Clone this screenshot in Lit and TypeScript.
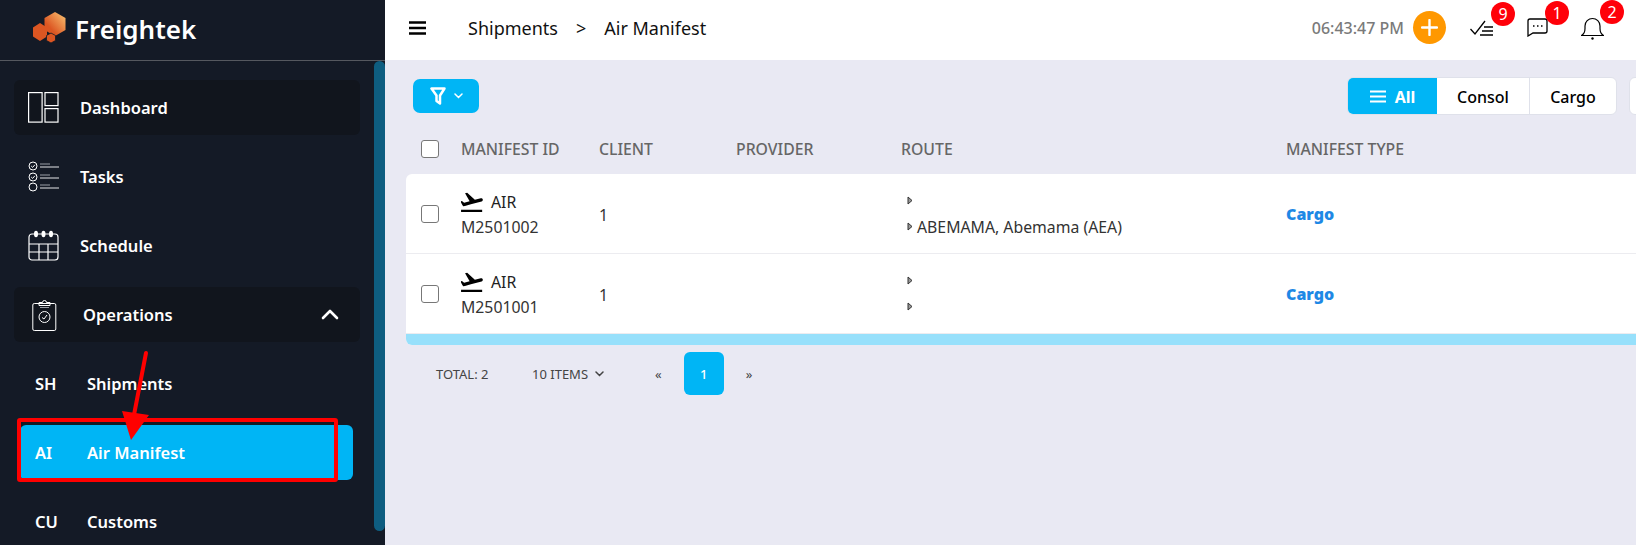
import { LitElement, html, css, svg } from "lit";
import { customElement } from "lit/decorators.js";

const check = (y: number, on: boolean) => svg`
  <circle cx="5" cy="${y}" r="4" fill="none" stroke="#fff" stroke-width="1"/>
  ${on ? svg`<path d="M3.2 ${y}l1.4 1.4 2.3-2.6" fill="none" stroke="#fff" stroke-width="1"/>` : ""}
  <path d="M12 ${y - 2}h10" stroke="#9a9ea6" stroke-width="1"/>
  <path d="M12 ${y + 1}h19" stroke="#e4e5e8" stroke-width="1"/>`;

const icons = {
  dash: html`<svg width="31" height="31" viewBox="0 0 31 31"><g fill="none" stroke="#fff" stroke-width="1.2"><rect x=".6" y=".6" width="13.5" height="29.5"/><rect x="17" y=".6" width="13" height="13"/><rect x="17" y="16.6" width="13" height="13.5"/></g></svg>`,
  tasks: html`<svg width="31" height="31" viewBox="0 0 31 31">${check(5, true)}${check(16, true)}${check(26, false)}</svg>`,
  cal: html`<svg width="31" height="31" viewBox="0 0 31 31"><g fill="none" stroke="#fff" stroke-width="1.2"><path d="M4 4h23a3 3 0 0 1 3 3v20a3 3 0 0 1-3 3H4a3 3 0 0 1-3-3V7a3 3 0 0 1 3-3z"/><path d="M1 14h29M1 22h29M11 14v16M20 14v16"/></g><g fill="#fff"><ellipse cx="8" cy="4" rx="2" ry="3.2"/><ellipse cx="15.500" cy="4" rx="2" ry="3.2"/><ellipse cx="23" cy="4" rx="2" ry="3.2"/></g></svg>`,
  ops: html`<svg width="25" height="33" viewBox="0 0 25 33"><g fill="none" stroke="#fff" stroke-width="1"><rect x=".8" y="5.500" width="23" height="27" rx="1.500"/><path d="M7 7.500V4.500h3.500a2 2 0 0 1 4 0H18v3z"/><path d="M8 9.500h9" stroke="#9a9ea6"/><circle cx="12.500" cy="19" r="5.500"/><path d="M10 19.500l2 1.500 3-4"/></g></svg>`,
  up: html`<svg width="18" height="11" viewBox="0 0 18 11"><path d="M2 9l7-7 7 7" fill="none" stroke="#fff" stroke-width="2.600" stroke-linecap="round" stroke-linejoin="round"/></svg>`,
  logo: html`<svg width="33" height="31" viewBox="0 0 33 31"><defs><linearGradient id="lg" x1="0" y1="1" x2="1" y2="0"><stop offset=".3" stop-color="#dc5622"/><stop offset="1" stop-color="#fac674"/></linearGradient></defs><path fill="url(#lg)" d="M22 0l10.500 6v12L22 24l-10.500-6V6z"/><path fill="#dc5622" d="M7 11l7 4.500v9L7 29l-7-4.500v-9z"/><path fill="#dc5622" stroke="#141a26" stroke-width=".8" d="M18 21l4.500 2.500v5L18 31l-4.500-2.500v-5z"/></svg>`,
  burger: html`<svg width="17" height="14" viewBox="0 0 17 14"><path d="M0 1.500h17M0 7h17M0 12.500h17" stroke="#000" stroke-width="2.600"/></svg>`,
  plus: html`<svg width="17" height="17" viewBox="0 0 17 17"><path d="M8.500 1v15M1 8.500h15" stroke="#fff" stroke-width="2.400" stroke-linecap="round"/></svg>`,
  checks: html`<svg width="24" height="16" viewBox="0 0 24 16"><path d="M.5 9l4.500 5L15 1M14 7h9M12 11h11M10 15h13" fill="none" stroke="#000" stroke-width="1.300"/></svg>`,
  chat: html`<svg width="21" height="19" viewBox="0 0 21 19"><path d="M3 1h15a2 2 0 0 1 2 2v10a2 2 0 0 1-2 2H6l-5 3V3a2 2 0 0 1 2-2z" fill="none" stroke="#000" stroke-width="1.300"/><path d="M6 8h1.500M10 8h1.500M14 8h1.500" stroke="#000" stroke-width="1.600"/></svg>`,
  bell: html`<svg width="23" height="23" viewBox="0 0 23 23"><path d="M.5 18.500c2.500-1.500 3.500-3 3.500-7V9a7.500 7.500 0 0 1 15 0v2.500c0 4 1 5.500 3.500 7z" fill="none" stroke="#000" stroke-width="1.200"/><circle cx="11.500" cy="21.500" r="1.200" fill="#000"/></svg>`,
  filter: html`<svg width="16" height="18" viewBox="0 0 16 18"><path d="M1.500 1.500h13L10 8.500V16.500L6.500 14V8.500z" fill="none" stroke="#fff" stroke-width="2.500" stroke-linejoin="round"/></svg>`,
  down: html`<svg width="9" height="6" viewBox="0 0 9 6"><path d="M1 1l3.500 3.500L8 1" fill="none" stroke="currentColor" stroke-width="1.500" stroke-linecap="round"/></svg>`,
  lines: html`<svg width="16" height="13" viewBox="0 0 16 13"><path d="M0 1.500h16M0 6.500h16M0 11.500h16" stroke="#fff" stroke-width="2"/></svg>`,
  plane: html`<svg width="22" height="20" viewBox="2.500 3 19.700 18"><path fill="#000" d="M2.500 19h19v2h-19zm19.570-9.360c-.21-.8-1.040-1.280-1.840-1.060L14.920 10l-6.900-6.430-1.930.51 4.140 7.170-4.970 1.330-1.970-1.540-1.450.39 1.820 3.160.77 1.330 1.600-.43 5.310-1.420 4.350-1.160L21 11.490c.81-.23 1.280-1.050 1.070-1.850z"/></svg>`,
  tri: html`<svg width="6" height="9" viewBox="0 0 6 9"><path d="M1 1l4 3.500L1 8z" fill="#999" stroke="#333" stroke-width="1"/></svg>`,
};

const rows = [
  { id: "M2501002", from: "", to: "ABEMAMA, Abemama (AEA)" },
  { id: "M2501001", from: "", to: "" },
];

@customElement("app-root")
export class AppRoot extends LitElement {
  static styles = css`
    :host {
      display: grid;
      grid-template-columns: 385px 1fr;
      height: 100vh;
      min-height: 545px;
      overflow: hidden;
      position: relative;
      font-family: "Noto Sans", "Open Sans", sans-serif;
    }
    .side { background: #141a26; color: #fff; display: flex; flex-direction: column; overflow: hidden; }
    .brand { height: 60px; border-bottom: 1px solid #55585f; display: flex; align-items: center; gap: 8px; padding-left: 33px; box-sizing: content-box; font-size: 26px; font-weight: 600; flex: none; }
    .brand svg { margin-top: -5px; }
    .brand span { margin-top: -3px; margin-left: 1px; }
    .side-body { display: flex; flex: 1; min-height: 0; }
    .nav { flex: 1; padding: 19px 14px 0; display: flex; flex-direction: column; gap: 14px; overflow: hidden; }
    .item { flex: none; height: 55px; display: flex; align-items: center; font-size: 16.500px; font-weight: 600; border-radius: 6px; padding-left: 14px; }
    .item .ic { width: 52px; display: flex; flex: none; }
    .boxed { background: #11151d; }
    .ops { padding-left: 18px; }
    .ops .ic { width: 51px; }
    .ops .up { margin-left: auto; margin-right: 21px; display: flex; }
    .sub { margin: 0 7px 0 6px; padding-left: 15px; }
    .sub .abbr { width: 52px; flex: none; }
    .sub.active { background: #00b5f5; }
    .thumb { width: 11px; height: 470px; background: #0e5d80; border-radius: 6px; flex: none; }

    .main { background: #e9e9f3; min-width: 0; overflow: hidden; }
    .top { height: 60px; background: #fff; display: flex; align-items: center; padding: 0 32px 4px 24px; box-sizing: border-box; }
    .burger { display: flex; margin-right: 42px; }
    .crumb { font-size: 18px; color: #111; display: flex; gap: 18px; }
    .right { margin-left: auto; display: flex; align-items: center; }
    .clock { font-size: 16px; font-weight: 500; color: #7a7a7a; margin-right: 9px; }
    .add { width: 33px; height: 33px; border-radius: 50%; background: #ff9800; display: flex; align-items: center; justify-content: center; margin-right: 24px; margin-top: -1px; }
    .bi { position: relative; display: flex; margin-right: 33px; }
    .bi.chat { margin-top: -2px; }
    .bi:last-child { margin-right: 0; }
    .badge { position: absolute; width: 24px; height: 24px; border-radius: 50%; background: #ff0009; color: #fff; font-size: 16px; display: flex; align-items: center; justify-content: center; }

    .tools { display: flex; justify-content: space-between; align-items: center; padding: 17px 0 0 28px; height: 38px; box-sizing: content-box; }
    .fbtn { width: 66px; height: 34px; background: #00b5f5; border-radius: 7px; color: #fff; display: flex; align-items: center; justify-content: center; gap: 8px; }
    .segs { display: flex; gap: 12px; margin-right: -33px; }
    .seg { display: flex; height: 38px; background: #fff; border-radius: 6px; border: 1px solid #dfe1ea; box-sizing: border-box; overflow: hidden; }
    .seg > div { display: flex; align-items: center; justify-content: center; gap: 9px; font-size: 16px; font-weight: 500; color: #000; padding-top: 1px; box-sizing: border-box; }
    .seg .all { width: 89px; background: #00b5f5; color: #fff; font-weight: 700; }
    .seg .con { width: 93px; border-right: 1px solid #dfe1ea; }
    .seg .car { width: 86px; }
    .blank { width: 40px; }

    .grid { display: grid; grid-template-columns: 55px 138px 137px 165px 385px 1fr; align-items: center; }
    .thead { margin: 19px 0 10px 21px; height: 30px; font-size: 15.800px; font-weight: 500; color: #666; }
    .box { width: 18px; height: 18px; box-sizing: border-box; border: 1.500px solid #777; border-radius: 3px; background: #fff; margin-left: 15px; }
    .tbody { margin-left: 21px; background: #fff; border-radius: 6px 0 0 6px; overflow: hidden; }
    .row { height: 79px; border-bottom: 1px solid #ececf0; font-size: 15.800px; color: #333; }
    .row:last-of-type { border-bottom: 1px solid #f2f2f6; }
    .mid { display: flex; flex-direction: column; gap: 6px; }
    .mid > div { line-height: 20px; }
    .air { display: flex; align-items: center; gap: 8px; color: #222; }
    .idcell { gap: 5px; }
    .idcell .air { margin-top: 1px; }
    .num { padding-top: 2px; }
    .pt { display: flex; align-items: center; gap: 4px; height: 20px; margin-left: 6px; }
    .cargo { font-weight: 900; color: #1e88e5; font-size: 16px; }
    .hbar { height: 11px; background: #97e0fb; }

    .pager { display: flex; align-items: center; margin: 7px 0 0 51px; height: 43px; font-size: 13px; color: #444; }
    .total { width: 96px; }
    .items { display: flex; align-items: center; gap: 7px; width: 123px; }
    .pg { width: 40px; height: 43px; border-radius: 6px; background: #00b5f5; color: #fff; display: flex; align-items: center; justify-content: center; font-weight: 500; margin: 0 22px 0 22px; }

    .mark { position: absolute; left: 17px; top: 418px; width: 321px; height: 64px; box-sizing: border-box; border: 4px solid #ff0000; border-radius: 3px; pointer-events: none; }
    .arrow { position: absolute; left: 115px; top: 350px; pointer-events: none; }
  `;

  render() {
    return html`
      <aside class="side">
        <div class="brand">${icons.logo}<span>Freightek</span></div>
        <div class="side-body">
          <nav class="nav">
            <div class="item boxed"><span class="ic">${icons.dash}</span>Dashboard</div>
            <div class="item"><span class="ic">${icons.tasks}</span>Tasks</div>
            <div class="item"><span class="ic">${icons.cal}</span>Schedule</div>
            <div class="item boxed ops"><span class="ic">${icons.ops}</span>Operations<span class="up">${icons.up}</span></div>
            <div class="item sub"><span class="abbr">SH</span>Shipments</div>
            <div class="item sub active"><span class="abbr">AI</span>Air Manifest</div>
            <div class="item sub"><span class="abbr">CU</span>Customs</div>
          </nav>
          <div class="thumb"></div>
        </div>
      </aside>
      <main class="main">
        <header class="top">
          <span class="burger">${icons.burger}</span>
          <div class="crumb"><span>Shipments</span><span>&gt;</span><span>Air Manifest</span></div>
          <div class="right">
            <span class="clock">06:43:47 PM</span>
            <span class="add">${icons.plus}</span>
            <span class="bi">${icons.checks}<span class="badge" style="left:21px;top:-18px">9</span></span>
            <span class="bi chat">${icons.chat}<span class="badge" style="left:18px;top:-17px">1</span></span>
            <span class="bi">${icons.bell}<span class="badge" style="left:19px;top:-17px">2</span></span>
          </div>
        </header>
        <div class="tools">
          <div class="fbtn">${icons.filter}${icons.down}</div>
          <div class="segs">
            <div class="seg">
              <div class="all">${icons.lines}All</div>
              <div class="con">Consol</div>
              <div class="car">Cargo</div>
            </div>
            <div class="seg blank"></div>
          </div>
        </div>
        <div class="grid thead">
          <div class="box"></div><div>MANIFEST ID</div><div>CLIENT</div><div>PROVIDER</div><div>ROUTE</div><div>MANIFEST TYPE</div>
        </div>
        <div class="tbody">
          ${rows.map(
            (r) => html`<div class="grid row">
              <div class="box"></div>
              <div class="mid idcell"><div class="air">${icons.plane}AIR</div><div>${r.id}</div></div>
              <div class="num">1</div>
              <div></div>
              <div class="mid"><div class="pt">${icons.tri}${r.from}</div><div class="pt">${icons.tri}${r.to}</div></div>
              <div class="cargo">Cargo</div>
            </div>`
          )}
          <div class="hbar"></div>
        </div>
        <div class="pager">
          <span class="total">TOTAL: 2</span>
          <span class="items">10 ITEMS ${icons.down}</span>
          <span>«</span>
          <span class="pg">1</span>
          <span>»</span>
        </div>
      </main>
      <div class="mark"></div>
      <svg class="arrow" width="40" height="95" viewBox="0 0 40 95"><path d="M31 3L18 70" stroke="#f00" stroke-width="4" stroke-linecap="round"/><path d="M7 61l27 4-18 25z" fill="#f00"/></svg>
    `;
  }
}
